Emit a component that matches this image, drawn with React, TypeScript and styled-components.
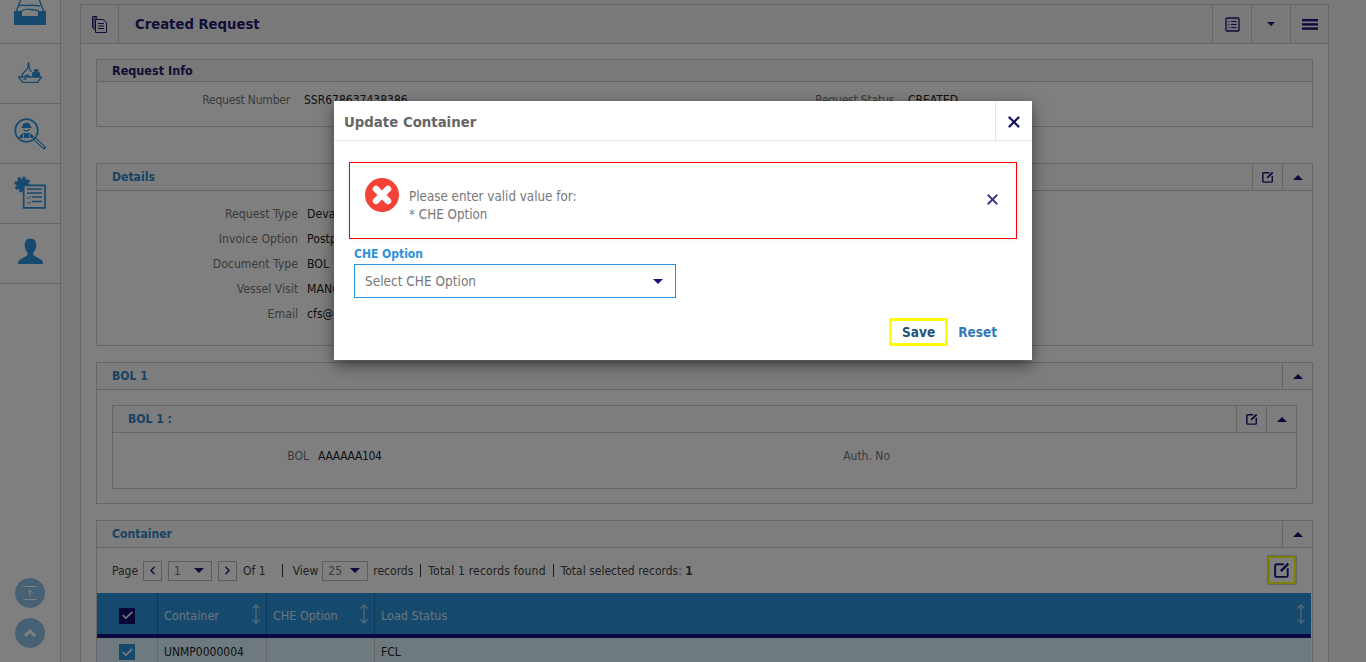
import React from "react";
import styled, { createGlobalStyle } from "styled-components";
import { X, ChevronLeft, ChevronRight, Check } from "lucide-react";

const Global = createGlobalStyle`
  html, body { margin: 0; padding: 0; height: 662px; overflow: hidden; background: #fff; }
  * { box-sizing: border-box; }
  body { font-family: "DejaVu Sans Condensed", "DejaVu Sans", sans-serif; font-size: 12px; color: #333; }
`;

const Shell = styled.div`display: flex; height: 662px; overflow: hidden; position: relative; background: #f3f3f3;`;
const Sidebar = styled.aside`width: 61px; flex: none; height: 662px; background: #fff; border-right: 1px solid #ccc; display: flex; flex-direction: column;`;
const NavItem = styled.div<{ $h: number; $up?: number }>`height: ${p => p.$h}px; flex: none; border-bottom: 1px solid #ccc; display: flex; align-items: center; justify-content: center; color: #2a94dc; overflow: hidden; padding-bottom: ${p => p.$up ?? 0}px;`;
const TrayItem = styled(NavItem)`align-items: flex-start;`;
const SideTools = styled.div`margin-top: auto; padding-bottom: 14px; display: flex; flex-direction: column; align-items: center; gap: 10px; padding-right: 1px;`;
const RoundBtn = styled.div`width: 30px; height: 30px; border-radius: 50%; background: #8fc3e8; display: flex; align-items: center; justify-content: center; color: #fff;`;

const Content = styled.main`flex: 1; min-width: 0; padding: 4px 37px 0 19px;`;
const Page = styled.div`background: #fff; border: 1px solid #ccc; border-bottom: 0; height: 658px; overflow: hidden;`;
const PageHead = styled.header`height: 39px; display: flex; align-items: stretch; border-bottom: 1px solid #ccc; background: #f3f3f3; color: #1b1478;`;
const HeadIcon = styled.div`width: 38px; flex: none; border-right: 1px solid #ccc; display: flex; align-items: center; justify-content: center;`;
const PageTitle = styled.h1`margin: 0 0 0 16px; flex: 1; font-size: 14.7px; font-weight: 700; line-height: 38px; color: #201a6e;`;
const HeadBtn = styled.div`width: 39px; flex: none; border-left: 1px solid #ccc; display: flex; align-items: center; justify-content: center; &:last-child { width: 38px; }`;
const Body = styled.div`padding: 15px 15px 0;`;

const Panel = styled.section<{ $gap?: number }>`border: 1px solid #ccc; margin-bottom: ${p => p.$gap ?? 16}px; background: #fff;`;
const PanelHead = styled.div<{ $h?: number; $tone?: boolean }>`height: ${p => p.$h ?? 27}px; display: flex; align-items: stretch; border-bottom: 1px solid #ccc; background: ${p => p.$tone ? "#f2f2f2" : "#fafafa"};`;
const PanelTitle = styled.div`flex: 1; padding-left: 15px; font-weight: 700; font-size: 12.1px; line-height: 26px; color: #2e86c8;`;
const InnerTitle = styled(PanelTitle)`line-height: 27px;`;
const InfoTitle = styled.div`flex: 1; padding-left: 15px; font-weight: 700; font-size: 12.5px; line-height: 21px; color: #1e1a6b;`;
const PanelBtn = styled.div`width: 30px; flex: none; border-left: 1px solid #ccc; display: flex; align-items: center; justify-content: center; color: #1b1478;`;
const Caret = styled.i<{ $down?: boolean; $small?: boolean }>`display: block; width: 0; height: 0; border-left: ${p => p.$small ? 4 : 5}px solid transparent; border-right: ${p => p.$small ? 4 : 5}px solid transparent; ${p => p.$down ? `border-top: ${p.$small ? 4 : 5}px solid #1b1478;` : "border-bottom: 5px solid #1b1478;"}`;

const InfoBody = styled.div`height: 44px; padding-top: 8px; display: grid; grid-template-columns: 608px 1fr;`;
const DetailBody = styled.div`height: 154px; padding-top: 13px; display: flex; flex-direction: column; font-size: 12.2px;`;
const Field = styled.div<{ $label: number; $gap?: number }>`display: grid; grid-template-columns: ${p => p.$label}px 1fr; column-gap: ${p => p.$gap ?? 14}px; height: 25px; line-height: 20px;`;
const FieldLabel = styled.span<{ $tight?: boolean }>`text-align: right; color: #777; white-space: nowrap; ${p => p.$tight ? "letter-spacing: -.2px;" : ""}`;
const FieldValue = styled.span<{ $tight?: boolean }>`color: #222; white-space: nowrap; ${p => p.$tight ? "letter-spacing: -.33px;" : ""}`;
const BolBody = styled.div`padding: 15px 15px 14px;`;
const InnerBody = styled.div`height: 55px; padding-top: 13px; display: grid; grid-template-columns: 555px 1fr;`;

const Toolbar = styled.div`height: 45px; padding: 0 15px; display: flex; align-items: center; color: #444;`;
const PageLabel = styled.span`margin-right: -1px;`;
const Pager = styled.div`width: 19px; height: 20px; flex: none; border: 1px solid #bbb; display: flex; align-items: center; justify-content: center; color: #1b1478; margin: 0 6px;`;
const MiniSelect = styled.div<{ $w: number; $m: string }>`width: ${p => p.$w}px; height: 20px; flex: none; margin: ${p => p.$m}; border: 1px solid #bbb; display: flex; align-items: center; justify-content: space-between; padding: 0 7px 0 5px; color: #777;`;
const Sep = styled.span<{ $l: number; $r: number }>`width: 1px; height: 13px; flex: none; background: #333; margin: 0 ${p => p.$r}px 0 ${p => p.$l}px;`;
const TotalText = styled.span`letter-spacing: .2px;`;
const EditBox = styled.div`width: 30px; height: 30px; margin: -1px 0 0 auto; border: 3px solid #ffff00; outline: 1px solid #ccc; outline-offset: -1px; display: flex; align-items: center; justify-content: center; color: #1b1478; background: #fff;`;

const Table = styled.div`margin-right: 1px;`;
const THead = styled.div`height: 45px; display: grid; grid-template-columns: 60px 109px 108px 1fr; background: #2a94dc; border-bottom: 4px solid #100e80;`;
const Th = styled.div`position: relative; border-left: 1px solid #1a70b0; padding: 4px 0 0 6px; display: flex; align-items: center; color: #d8e8f2; font-size: 12.5px; &:first-child { border-left: 0; padding: 4px 0 0; justify-content: center; }`;
const SortIcon = styled.svg`position: absolute; right: 5px; top: 11px;`;
const TRow = styled.div`height: 24px; display: grid; grid-template-columns: 60px 109px 108px 1fr; background: #def4ff;`;
const Td = styled.div`border-left: 1px solid #ccc; padding-left: 6px; line-height: 28px; color: #222; &:first-child { border-left: 0; padding: 6px 0 0; display: flex; justify-content: center; }`;
const Check1 = styled.div<{ $dark?: boolean }>`width: 16px; height: 16px; background: ${p => p.$dark ? "#100e70" : "#2a94dc"}; color: #fff; display: flex; align-items: center; justify-content: center;`;

const Overlay = styled.div`position: absolute; inset: 0; background: rgba(0,0,0,.5);`;
const Modal = styled.div`position: absolute; left: 334px; top: 101px; width: 698px; height: 259px; background: #fff; box-shadow: 0 5px 15px rgba(0,0,0,.5); display: flex; flex-direction: column;`;
const ModalHead = styled.div`height: 40px; flex: none; display: flex; border-bottom: 1px solid #e5e5e5;`;
const ModalTitle = styled.h2`margin: 0; flex: 1; padding-left: 10px; font-size: 14.8px; font-weight: 700; line-height: 42px; color: #666;`;
const ModalClose = styled.div`width: 37px; padding-top: 2px; border-left: 1px solid #e5e5e5; display: flex; align-items: center; justify-content: center; color: #14105e;`;
const ModalBody = styled.div`padding: 21px 15px 0; flex: 1;`;
const ErrorBox = styled.div`height: 77px; border: 1px solid #f00; display: flex; align-items: center; padding: 0 15px; box-shadow: 0 0 3px rgba(0,0,0,.12);`;
const ErrorIconWrap = styled.div`display: flex; margin-top: -12px;`;
const ErrorText = styled.div`flex: 1; margin-left: 10px; padding-top: 11px; font-size: 13.3px; line-height: 18px; color: #777;`;
const ErrorClose = styled.div`color: #3b3580; display: flex; margin-top: -2px;`;
const FieldBlock = styled.div`margin: 7px 0 0 5px;`;
const BlueLabel = styled.label`display: block; font-size: 12px; font-weight: 700; line-height: 17px; color: #2b93dd;`;
const Select = styled.div`width: 322px; height: 34px; margin-top: 1px; border: 1px solid #2b93dd; display: flex; align-items: center; justify-content: space-between; padding: 0 12px 0 10px; font-size: 13.5px; color: #777;`;
const Actions = styled.div`display: flex; justify-content: flex-end; align-items: center; margin-top: 20px; padding-right: 20px; gap: 10px;`;
const SaveBtn = styled.button`width: 59px; height: 28px; padding: 0; border: 3px solid #ffff00; background: #fff; font: 700 13.5px "DejaVu Sans Condensed", sans-serif; color: #23527c;`;
const ResetBtn = styled.button`border: 0; padding: 0; background: none; font: 700 13.5px "DejaVu Sans Condensed", sans-serif; color: #337ab7;`;

const Tray = () => (
  <svg width="32" height="26" viewBox="0 0 32 26" fill="none" stroke="currentColor" strokeWidth="1.4">
    <path d="M2.500 11 7-1M29.500 11 25-1M5.500 6c3-2 5 0 8-.5s7-.5 13 .5M7.500 11c3-2.500 6-1.500 9-1.500s5 0 8 1.500" />
    <path d="M0 11h8v5h16v-5h8v14H0z" fill="currentColor" stroke="none" />
  </svg>
);
const Ship = () => (
  <svg width="24" height="21" viewBox="0 0 24 21" fill="none" stroke="currentColor" strokeWidth="1.3">
    <path d="M.5 15h23l-4 5.500H4.500z" />
    <path d="M4 15c-1-4 4-6 5.500-8.500L10.500.5c1 2.500 0 4.500 1.500 7l1.500 2.500" />
    <path d="M7 15c0-2 3-3 5 0" />
    <path d="M14.500 15v-4.500h7V15M16.500 10.500v-3h3.500v3" fill="currentColor" strokeWidth=".8" />
    <path d="M5.500 17.500l3-.8" />
  </svg>
);
const Inspect = () => (
  <svg width="32" height="32" viewBox="0 0 32 32" fill="none" stroke="currentColor">
    <circle cx="12.500" cy="12.500" r="11.300" strokeWidth="1.700" />
    <path d="M21 21l9 8.500" strokeWidth="3.600" strokeLinecap="round" />
    <path d="M21.500 21.500l8 7.500" strokeWidth="1.300" stroke="#fff" strokeLinecap="round" />
    <path d="M8.500 9a4 4 0 0 1 8 0z" fill="currentColor" strokeWidth=".8" />
    <path d="M7.500 9.500h10M9.500 11a3.200 3.200 0 0 0 6 0" strokeWidth="1.200" />
    <path d="M5.500 20c.5-3 2.500-4 4.500-4.500h5c2 .5 4 1.500 4.500 4.500" fill="currentColor" strokeWidth=".8" />
    <path d="M9.500 16v5M15.500 16v5" stroke="#fff" strokeWidth=".8" />
  </svg>
);
const GearDoc = () => (
  <svg width="32" height="33" viewBox="0 0 32 33" fill="none" stroke="currentColor">
    <circle cx="8.500" cy="8.500" r="6.800" strokeWidth="2.600" strokeDasharray="3 2.340" />
    <circle cx="8.500" cy="8.500" r="6.300" fill="currentColor" stroke="none" />
    <path d="M9.700 9.300H31v22.500H9.700z" fill="#fff" strokeWidth="1.700" />
    <path d="M13 13h15M13 17h15M18 21h10M18 25.500h10" strokeWidth="1.700" />
    <path d="M13 21.500l1.500 1.500 2.500-3M13 26.500l1.500 1.500 2.500-3" strokeWidth=".9" />
  </svg>
);
const Person = () => (
  <svg width="25" height="27" viewBox="0 0 26 27" fill="currentColor">
    <path d="M13 0c4 0 6 3 6 7 0 3-1.500 6-3 8-.5 1 0 2 1 3l7 4c1 .5 2 2 2 4.500H0c0-2.500 1-4 2-4.500l7-4c1-1 1.500-2 1-3-1.500-2-3-5-3-8 0-4 2-7 6-7z" />
  </svg>
);
const Sort = () => (
  <SortIcon width="10" height="20" viewBox="0 0 10 20" fill="none" stroke="#a8cfe9" strokeWidth="1.300">
    <path d="M5 1v18M1.500 4.500 5 1l3.500 3.500M1.500 15.500 5 19l3.500-3.500" />
  </SortIcon>
);
const DocIcon = () => (
  <svg width="15" height="17" viewBox="0 0 15 17" fill="none" stroke="#1b1478" strokeWidth="1">
    <path d="M5 .5H.5V12M6 2H2V14" />
    <path d="M3.500 3.500H11l3.500 3v10h-11z" fill="#f3f3f3" />
    <path d="M6 7.500h6M6 10h6M6 12.500h6" />
  </svg>
);
const ListIcon = () => (
  <svg width="15" height="15" viewBox="0 0 15 15" fill="none" stroke="#1b1478">
    <rect x="1" y="1" width="13" height="13" rx="1" strokeWidth="1.300" fill="#e6e6ef" />
    <path d="M3.500 4.500h1M6 4.500h5.500M3.500 7.500h1M6 7.500h5.500M3.500 10.500h1M6 10.500h5.500" strokeWidth="1.200" />
  </svg>
);
const Burger = () => (
  <svg width="16" height="11" viewBox="0 0 16 11" fill="#1b1478">
    <rect width="16" height="2.400" /><rect y="4.200" width="16" height="2.400" /><rect y="8.400" width="16" height="2.400" />
  </svg>
);
const ErrIcon = () => (
  <svg width="34" height="34" viewBox="0 0 34 34">
    <circle cx="17" cy="17" r="17" fill="#f44336" />
    <path d="M11 11l12 12M23 11 11 23" stroke="#fff" strokeWidth="6.500" strokeLinecap="round" />
  </svg>
);
const Edit = ({ s = 12 }: { s?: number }) => (
  <svg width={s} height={s} viewBox="0 0 14 14" fill="none" stroke="#1b1478">
    <path d="M8.500 2H2a1 1 0 0 0-1 1v9a1 1 0 0 0 1 1h9a1 1 0 0 0 1-1V5.500" strokeWidth="1.700" />
    <path d="M6 8l6.500-6.500" strokeWidth="2.100" />
  </svg>
);

export default function App() {
  return (
    <Shell>
      <Global />
      <Sidebar>
        <TrayItem $h={44}><Tray /></TrayItem>
        <NavItem $h={60} $up={3}><Ship /></NavItem>
        <NavItem $h={60}><Inspect /></NavItem>
        <NavItem $h={60} $up={2}><GearDoc /></NavItem>
        <NavItem $h={60} $up={4}><Person /></NavItem>
        <SideTools>
          <RoundBtn>
            <svg width="16" height="16" viewBox="0 0 16 16" fill="none" stroke="#fff" strokeWidth="1">
              <path d="M1.500 1.500h13M1.500 14.500h13M8 12V5M5.500 7.500 8 5l2.500 2.500" />
            </svg>
          </RoundBtn>
          <RoundBtn>
            <svg width="14" height="10" viewBox="0 0 14 10" fill="none" stroke="#fff" strokeWidth="3">
              <path d="M2 8l5-5 5 5" />
            </svg>
          </RoundBtn>
        </SideTools>
      </Sidebar>
      <Content>
        <Page>
          <PageHead>
            <HeadIcon><DocIcon /></HeadIcon>
            <PageTitle>Created Request</PageTitle>
            <HeadBtn><ListIcon /></HeadBtn>
            <HeadBtn><Caret $down $small /></HeadBtn>
            <HeadBtn><Burger /></HeadBtn>
          </PageHead>
          <Body>
            <Panel $gap={36}>
              <PanelHead $h={22} $tone><InfoTitle>Request Info</InfoTitle></PanelHead>
              <InfoBody>
                <Field $label={193}><FieldLabel $tight>Request Number</FieldLabel><FieldValue>SSR678637438386</FieldValue></Field>
                <Field $label={189}><FieldLabel $tight>Request Status</FieldLabel><FieldValue>CREATED</FieldValue></Field>
              </InfoBody>
            </Panel>
            <Panel>
              <PanelHead>
                <PanelTitle>Details</PanelTitle>
                <PanelBtn><Edit /></PanelBtn>
                <PanelBtn><Caret /></PanelBtn>
              </PanelHead>
              <DetailBody>
                <Field $label={201} $gap={9}><FieldLabel>Request Type</FieldLabel><FieldValue>Devanning</FieldValue></Field>
                <Field $label={201} $gap={9}><FieldLabel>Invoice Option</FieldLabel><FieldValue>Postpaid</FieldValue></Field>
                <Field $label={201} $gap={9}><FieldLabel>Document Type</FieldLabel><FieldValue>BOL</FieldValue></Field>
                <Field $label={201} $gap={9}><FieldLabel>Vessel Visit</FieldLabel><FieldValue>MANGO</FieldValue></Field>
                <Field $label={201} $gap={9}><FieldLabel>Email</FieldLabel><FieldValue>cfs@mail.com</FieldValue></Field>
              </DetailBody>
            </Panel>
            <Panel>
              <PanelHead><PanelTitle>BOL 1</PanelTitle><PanelBtn><Caret /></PanelBtn></PanelHead>
              <BolBody>
                <Panel $gap={0}>
                  <PanelHead>
                    <InnerTitle>BOL 1 :</InnerTitle>
                    <PanelBtn><Edit /></PanelBtn>
                    <PanelBtn><Caret /></PanelBtn>
                  </PanelHead>
                  <InnerBody>
                    <Field $label={196} $gap={9}><FieldLabel>BOL</FieldLabel><FieldValue $tight>AAAAAA104</FieldValue></Field>
                    <Field $label={222} $gap={9}><FieldLabel>Auth. No</FieldLabel><FieldValue /></Field>
                  </InnerBody>
                </Panel>
              </BolBody>
            </Panel>
            <Panel $gap={0}>
              <PanelHead><PanelTitle>Container</PanelTitle><PanelBtn><Caret /></PanelBtn></PanelHead>
              <Toolbar>
                <PageLabel>Page</PageLabel>
                <Pager><ChevronLeft size={13} strokeWidth={2.4} /></Pager>
                <MiniSelect $w={44} $m="0"><span>1</span><Caret $down /></MiniSelect>
                <Pager><ChevronRight size={13} strokeWidth={2.4} /></Pager>
                <span>Of 1</span>
                <Sep $l={16} $r={10} />
                <span>View</span>
                <MiniSelect $w={46} $m="0 5px 0 4px"><span>25</span><Caret $down /></MiniSelect>
                <span>records</span>
                <Sep $l={7} $r={7} />
                <TotalText>Total 1 records found</TotalText>
                <Sep $l={7} $r={7} />
                <span>Total selected records: <b>1</b></span>
                <EditBox><Edit s={16} /></EditBox>
              </Toolbar>
              <Table>
                <THead>
                  <Th><Check1 $dark><Check size={13} strokeWidth={3} /></Check1></Th>
                  <Th>Container<Sort /></Th>
                  <Th>CHE Option<Sort /></Th>
                  <Th>Load Status<Sort /></Th>
                </THead>
                <TRow>
                  <Td><Check1><Check size={13} strokeWidth={3} /></Check1></Td>
                  <Td>UNMP0000004</Td>
                  <Td />
                  <Td>FCL</Td>
                </TRow>
              </Table>
            </Panel>
          </Body>
        </Page>
      </Content>
      <Overlay />
      <Modal>
        <ModalHead>
          <ModalTitle>Update Container</ModalTitle>
          <ModalClose><X size={18} strokeWidth={3} /></ModalClose>
        </ModalHead>
        <ModalBody>
          <ErrorBox>
            <ErrorIconWrap><ErrIcon /></ErrorIconWrap>
            <ErrorText>Please enter valid value for:<br />* CHE Option</ErrorText>
            <ErrorClose><X size={17} strokeWidth={2.6} /></ErrorClose>
          </ErrorBox>
          <FieldBlock>
            <BlueLabel>CHE Option</BlueLabel>
            <Select>Select CHE Option<Caret $down /></Select>
          </FieldBlock>
          <Actions>
            <SaveBtn>Save</SaveBtn>
            <ResetBtn>Reset</ResetBtn>
          </Actions>
        </ModalBody>
      </Modal>
    </Shell>
  );
}
